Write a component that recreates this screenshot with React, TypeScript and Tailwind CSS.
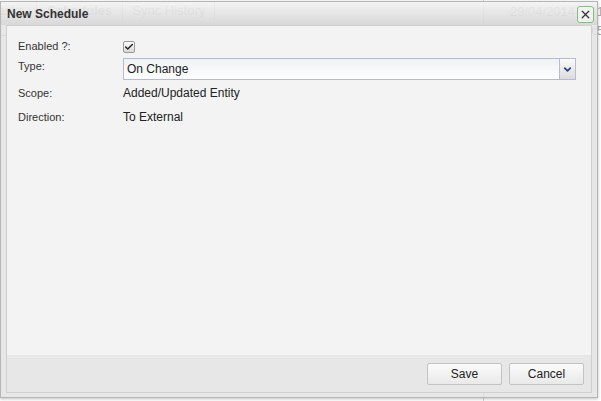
import { Check, ChevronDown, X } from 'lucide-react';

export default function App() {
  return (
    <div className="relative w-[601px] h-[401px] overflow-hidden bg-white font-['Liberation_Sans',Arial,sans-serif]">
      {/* Page behind the dialog */}
      <div className="flex h-full">
        <div className="flex-1">
          <div className="flex items-start h-[22px] pt-[1px] text-[13px] text-[#a0a0a0]">
            <span className="pr-[12px] -ml-[9px] border-r border-[#c4c4c4]">Tasks</span>
            <span className="px-[10px] font-bold border-r border-[#c4c4c4]">Schedules</span>
            <span className="px-[9px] border-r border-[#c4c4c4]">Sync History</span>
          </div>
          <div className="h-[14px] border-b border-[#d4d4d4]" />
        </div>
        <div className="w-[118px] border-l border-[#d4d4d4] pl-[26px] text-[13px] text-[#aaa] leading-[19px] pt-[2px] whitespace-nowrap">
          <div>29/04/2014 2:41 PM</div>
          <div>17/07/2013 10:50 AM</div>
        </div>
      </div>

      {/* Dialog */}
      <div className="absolute left-0 top-[1px] w-[598px] h-[397px] flex flex-col border border-[#b5b5b5] bg-[rgba(222,222,222,0.72)] shadow-[0_1px_3px_rgba(0,0,0,0.25)]">
        <div className="flex items-center justify-between h-[23px] pl-[6px] pr-[3px] bg-gradient-to-b from-[rgba(252,252,252,0.6)] to-[rgba(210,210,210,0.7)]">
          <span className="text-[12px] font-bold text-[#333]">New Schedule</span>
          <button className="flex items-center justify-center w-[17px] h-[17px] mt-[2px] rounded-[3px] border border-[#7cc576] bg-[#f2f2f2]">
            <X className="w-[13px] h-[13px] text-[#333]" strokeWidth={2.4} />
          </button>
        </div>

        <div className="flex-1 flex flex-col mx-[5px] mb-[4px] border border-[#cfcfcf]">
          <div className="flex-1 bg-[#f3f3f3] pt-[9px] pl-[11px] pr-[15px]">
            <div className="grid grid-cols-[105px_1fr] items-center text-[11px] text-[#333]">
              <span className="h-[23px] leading-[22px]">Enabled ?:</span>
              <div className="h-[23px] flex items-center">
                <span className="flex items-center justify-center w-[12px] h-[12px] rounded-[2px] border border-[#999] bg-gradient-to-b from-[#fdfdfd] to-[#d8d8d8]">
                  <Check className="w-[10px] h-[10px] text-[#222]" strokeWidth={3.5} />
                </span>
              </div>

              <span className="h-[23px] leading-[17px]">Type:</span>
              <div className="h-[23px]">
                <div className="flex h-[22px] border border-[#b8bbd0] bg-gradient-to-b from-[#eef1f3] to-white">
                  <span className="flex-1 pl-[3px] leading-[21px] text-[12px] text-[#222]">On Change</span>
                  <span className="flex items-center justify-center w-[16px] border-l border-[#b8bbd0] bg-gradient-to-b from-[#fafafa] to-[#dcdcdc]">
                    <ChevronDown className="w-[11px] h-[11px] text-[#2b4a8a]" strokeWidth={4} />
                  </span>
                </div>
              </div>

              <span className="h-[25px] leading-[25px]">Scope:</span>
              <span className="h-[25px] leading-[25px] text-[12px] text-[#222]">Added/Updated Entity</span>

              <span className="h-[23px] leading-[23px]">Direction:</span>
              <span className="h-[23px] leading-[23px] text-[12px] text-[#222]">To External</span>
            </div>
          </div>
          <div className="flex items-center justify-end gap-[7px] h-[37px] pr-[7px] bg-[#e7e7e7]">
            <button className="w-[75px] h-[22px] rounded-[2px] border border-[#c3c3c3] bg-gradient-to-b from-[#fbfbfb] to-[#e9e9e9] text-[12px] text-[#222]">Save</button>
            <button className="w-[75px] h-[22px] rounded-[2px] border border-[#c3c3c3] bg-gradient-to-b from-[#fbfbfb] to-[#e9e9e9] text-[12px] text-[#222]">Cancel</button>
          </div>
        </div>
      </div>
    </div>
  );
}
